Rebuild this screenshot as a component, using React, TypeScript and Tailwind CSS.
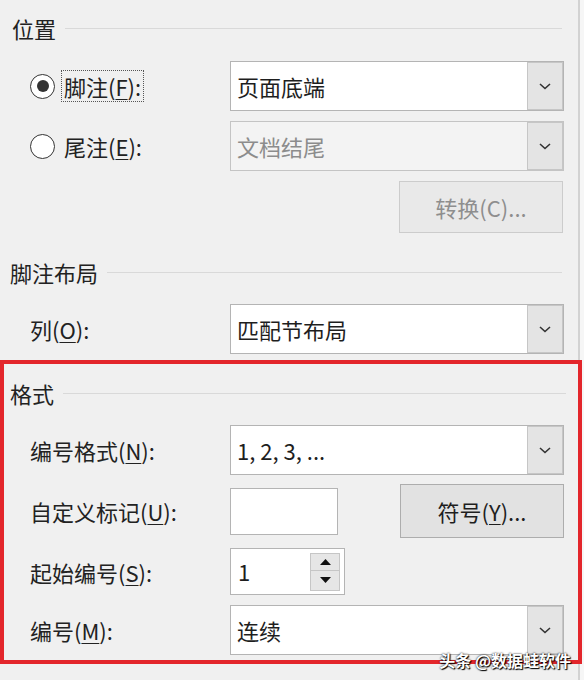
import React from 'react';

const FONT = { fontFamily: '"Noto Sans CJK SC", "Noto Sans", sans-serif' };

function Mn({ c }: { c: string }) {
  return <span className="underline underline-offset-[3px] decoration-1">{c}</span>;
}

function Header({ title, pad }: { title: string; pad: string }) {
  return (
    <div className={`flex items-center h-[30px] w-[562px] ${pad}`}>
      <span className="text-[22px] leading-none text-[#222]">{title}</span>
      <div className="flex-1 h-px bg-[#d9d9d9] ml-[9px]" />
    </div>
  );
}

function Chevron() {
  return (
    <svg width="12" height="7" viewBox="0 0 12 7">
      <path d="M1 1 L6 5.5 L11 1" fill="none" stroke="#333" strokeWidth="1.6" />
    </svg>
  );
}

function Select({ value, disabled }: { value: string; disabled?: boolean }) {
  return (
    <div
      className={`flex w-[334px] h-[50px] border ${
        disabled ? 'border-[#c4c4c4] bg-[#f3f3f3]' : 'border-[#b4b4b4] bg-white'
      }`}
    >
      <div className={`flex-1 flex items-center pl-[6px] text-[22px] ${disabled ? 'text-[#8c8c8c]' : 'text-[#1e1e1e]'}`}>
        {value}
      </div>
      <div className="w-[36px] flex items-center justify-center bg-[#e4e4e4] border border-[#c6c6c6]">
        <Chevron />
      </div>
    </div>
  );
}

function Row({ label, children, h = 'h-[50px]', mt }: { label: React.ReactNode; children: React.ReactNode; h?: string; mt: string }) {
  return (
    <div className={`flex items-center ${h} ${mt}`}>
      <div className="w-[200px] text-[22px] text-[#222] leading-none">{label}</div>
      {children}
    </div>
  );
}

function Radio({ checked }: { checked?: boolean }) {
  return (
    <div className="w-[25px] h-[25px] rounded-full border-[1.5px] border-[#333] bg-white flex items-center justify-center">
      {checked && <div className="w-[12px] h-[12px] rounded-full bg-[#333]" />}
    </div>
  );
}

export default function App() {
  return (
    <div className="w-[584px] h-[680px] bg-[#f6f6f6] flex relative overflow-hidden" style={FONT}>
      <div className="w-[580px] h-full bg-[#f0f0f0] border-r-2 border-[#d2d2d2] pt-[13px]">
        {/* 位置 */}
        <Header title="位置" pad="pl-[12px]" />
        <div className="pl-[30px]">
          <div className="flex items-center h-[50px] mt-[18px]">
            <div className="w-[200px] flex items-center gap-[6px]">
              <Radio checked />
              <span className="border border-dotted border-[#555] px-[2px] py-[4px] text-[22px] leading-none text-[#222]">
                脚注(<Mn c="F" />):
              </span>
            </div>
            <Select value="页面底端" />
          </div>
          <div className="flex items-center h-[50px] mt-[10px]">
            <div className="w-[200px] flex items-center gap-[9px]">
              <Radio />
              <span className="text-[22px] leading-none text-[#222]">
                尾注(<Mn c="E" />):
              </span>
            </div>
            <Select value="文档结尾" disabled />
          </div>
          <div className="flex justify-end mt-[10px] w-[533px]">
            <button className="w-[164px] h-[52px] border border-[#cccccc] bg-[#e9e9e9] text-[22px] text-[#8e8e8e]">
              转换(C)...
            </button>
          </div>
        </div>

        {/* 脚注布局 */}
        <div className="mt-[24px]">
          <Header title="脚注布局" pad="pl-[10px]" />
        </div>
        <div className="pl-[30px]">
          <Row mt="mt-[17px]" label={<>列(<Mn c="O" />):</>}>
            <Select value="匹配节布局" />
          </Row>
        </div>

        {/* 格式 */}
        <div className="w-[582px] mt-[6px] border-4 border-[#e3262b] pt-[14px] pb-[5px]">
          <Header title="格式" pad="pl-[6px]" />
          <div className="pl-[26px]">
            <Row mt="mt-[17px]" label={<>编号格式(<Mn c="N" />):</>}>
              <Select value="1, 2, 3, ..." />
            </Row>
            <Row mt="mt-[9px]" h="h-[54px]" label={<>自定义标记(<Mn c="U" />):</>}>
              <div className="w-[108px] h-[47px] bg-white border border-[#b4b4b4]" />
              <button className="ml-[62px] w-[164px] h-[54px] border border-[#adadad] bg-[#e2e2e2] text-[22px] text-[#1e1e1e]">
                符号(<Mn c="Y" />)...
              </button>
            </Row>
            <Row mt="mt-[10px]" h="h-[47px]" label={<>起始编号(<Mn c="S" />):</>}>
              <div className="w-[115px] h-[47px] bg-white border border-[#b4b4b4] flex items-center">
                <span className="flex-1 pl-[7px] text-[22px] text-[#1e1e1e]">1</span>
                <div className="flex flex-col mr-[4px] w-[30px]">
                  <div className="h-[18px] flex items-center justify-center bg-[#e6e6e6] border border-[#c6c6c6]">
                    <svg width="11" height="6" viewBox="0 0 11 6">
                      <path d="M0 6 L5.5 0 L11 6 Z" fill="#111" />
                    </svg>
                  </div>
                  <div className="h-[20px] flex items-center justify-center bg-[#e6e6e6] border border-t-0 border-[#c6c6c6]">
                    <svg width="11" height="6" viewBox="0 0 11 6">
                      <path d="M0 0 L5.5 6 L11 0 Z" fill="#111" />
                    </svg>
                  </div>
                </div>
              </div>
            </Row>
            <Row mt="mt-[10px]" label={<>编号(<Mn c="M" />):</>}>
              <Select value="连续" />
            </Row>
          </div>
        </div>
      </div>

      <span
        className="absolute right-[13px] bottom-[12px] text-[16px] leading-none text-white font-bold"
        style={{ textShadow: '0 0 2px #000, 1px 1px 1px #000' }}
      >
        头条 @数据蛙软件
      </span>
    </div>
  );
}
